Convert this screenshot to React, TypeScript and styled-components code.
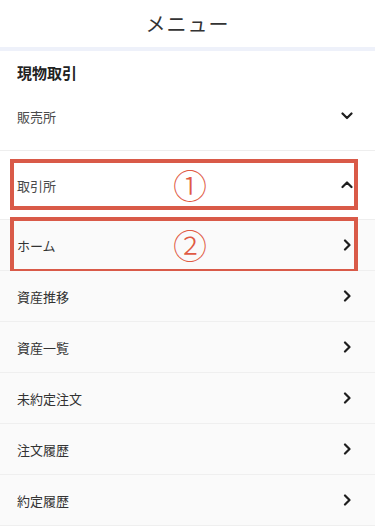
import styled, { createGlobalStyle } from "styled-components";

const GlobalStyle = createGlobalStyle`
  html, body {
    margin: 0;
    padding: 0;
    background: #ffffff;
    font-family: "Noto Sans CJK JP", "Noto Sans", sans-serif;
  }
`;

const Page = styled.div({
  width: "375px",
  height: "526px",
  overflow: "hidden",
  background: "#ffffff",
});

const Header = styled.header({
  height: "47px",
  display: "flex",
  alignItems: "center",
  justifyContent: "center",
  fontSize: "20px",
  color: "#333333",
  borderBottom: "4px solid #eef1fa",
  letterSpacing: "1px",
});

const SectionTitle = styled.div({
  padding: "12px 17px 0",
  lineHeight: "20px",
  height: "19px",
  fontSize: "15px",
  fontWeight: 700,
  color: "#222222",
});

const Row = styled.div<{ $sub?: boolean }>((p) => ({
  position: "relative",
  height: p.$sub ? "50px" : "68px",
  display: "flex",
  alignItems: "center",
  justifyContent: "space-between",
  padding: "0 22px 0 17px",
  background: p.$sub ? "#fafafa" : "#ffffff",
  borderBottom: p.$sub ? "1px solid #efefef" : "1px solid #eeeeee",
  fontSize: "13px",
  color: p.$sub ? "#333333" : "#4a4a4a",
}));

const Highlight = styled.div<{ $top: number; $bottom: number }>((p) => ({
  position: "absolute",
  left: "10px",
  right: "17px",
  top: `${p.$top}px`,
  bottom: `${p.$bottom}px`,
  border: "4px solid #d95a48",
  boxSizing: "border-box",
  display: "flex",
  alignItems: "center",
  justifyContent: "center",
  pointerEvents: "none",
}));

const Marker = styled.span({
  fontSize: "34px",
  fontWeight: 300,
  color: "#e05a44",
  lineHeight: 1,
  marginLeft: "12px",
});

type Dir = "down" | "up" | "right";

function Chevron({ dir }: { dir: Dir }) {
  const pts =
    dir === "down" ? "1.5,1.5 6,6 10.5,1.5" : dir === "up" ? "1.5,6 6,1.5 10.5,6" : "4,1.5 8.5,6 4,10.5";
  const h = dir === "right" ? 12 : 8;
  return (
    <svg width={12} height={h} viewBox={`0 0 12 ${h}`}>
      <polyline points={pts} fill="none" stroke="#1e1e1e" strokeWidth="2.2" strokeLinecap="round" strokeLinejoin="round" />
    </svg>
  );
}

const subItems = ["資産推移", "資産一覧", "未約定注文", "注文履歴", "約定履歴"];

export default function App() {
  return (
    <Page>
      <GlobalStyle />
      <Header>メニュー</Header>
      <SectionTitle>現物取引</SectionTitle>
      <Row>
        <span>販売所</span>
        <Chevron dir="down" />
      </Row>
      <Row>
        <span>取引所</span>
        <Chevron dir="up" />
        <Highlight $top={8} $bottom={9}>
          <Marker>①</Marker>
        </Highlight>
      </Row>
      <Row $sub>
        <span>ホーム</span>
        <Chevron dir="right" />
        <Highlight $top={-3} $bottom={-3}>
          <Marker>②</Marker>
        </Highlight>
      </Row>
      {subItems.map((label) => (
        <Row $sub key={label}>
          <span>{label}</span>
          <Chevron dir="right" />
        </Row>
      ))}
    </Page>
  );
}
